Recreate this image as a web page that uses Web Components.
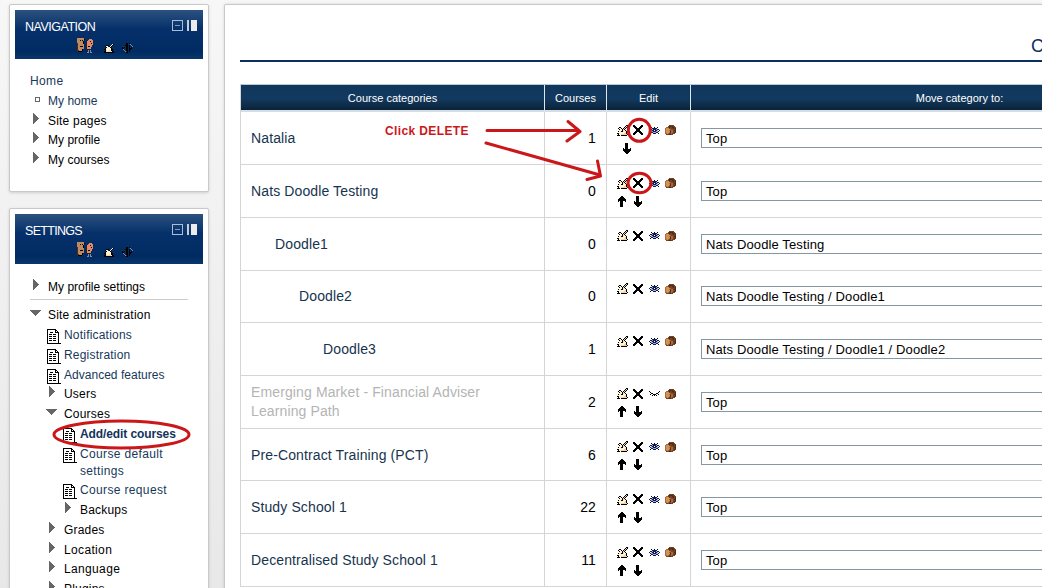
<!DOCTYPE html>
<html lang="en">
<head>
<meta charset="utf-8">
<title>Course categories</title>
<style>
    html, body {
        margin: 0;
        height: 588px;
        overflow: hidden;
        background: linear-gradient(#f7f7f7, #e8e8e8);
        font-family: "Liberation Sans", Arial, sans-serif;
    }
</style>
</head>
<body>
<courses-page></courses-page>

<script>
const COLOURS = {
    a: '#666666', k: '#000000', w: '#fff3d6', f: '#f3d5a8', b: '#101a58', c: '#9db0cc', n: '#a8683c',
    d: '#4a2c18', m: '#754321', o: '#cf9155', s: '#c08a60', r: '#e08a68', x: '#3a1c1c', g: '#26364f', y: '#7d8ea4'
};

const ICONS = {
    hand: [
        '.........kk',
        '........kfk',
        '..kk...kfk.',
        '.kwwk.kfk..',
        '..kwwkfk...',
        '..wwwkfwk..',
        '.kwwkkwwwk.',
        '..wwwwwwfk.',
        'kkwwwwwffk.',
        '.kwwffffffk',
        'kkk.kkkkkk.'
    ],
    smallhand: [
        '........wk',
        '..kkk..wk.',
        '.kww.kwk..',
        '..kwwwk...',
        '.kwwwwwk..',
        'kkwwwwwkk.',
        '.kfwwfwkk.',
        'kkffffffkk',
        'kkkkkkkkkk'
    ],
    cross: [
        'kk......kk',
        'kkk....kkk',
        '.kkk..kkk.',
        '..kkkkkk..',
        '...kkkk...',
        '...kkkk...',
        '..kkkkkk..',
        '.kkk..kkk.',
        'kkk....kkk',
        'kk......kk'
    ],
    eye: [
        '..k..k..k..',
        '...bbbbb...',
        '.bbcbbbcbb.',
        'b.cbbwbbc.b',
        '.bccbbbccb.',
        '..bbcccbb..',
        '.k..bbb..k.'
    ],
    closed: [
        'k.........k',
        '.k.......k.',
        '..kk...kk..',
        '.k..kkk..k.',
        '...k.k.k...'
    ],
    box: [
        '....mmmmm..',
        '...mddddmm.',
        '.nnmdmmddmm',
        'nooommmmdmd',
        'noooonmmmmd',
        'nooonmnnmdd',
        'noooodnnmmd',
        'nooondnnmdm',
        'nnonmmnmmm.',
        '.mmmddmm...'
    ],
    up: [
        '....kk....',
        '...kkkk...',
        '..kkkkkk..',
        '.kkkkkkkk.',
        '.kkkkkkkk.',
        '.k.kkk..k.',
        '...kkk....',
        '...kkk....',
        '...kkk....',
        '...kkk....',
        '...kkk....'
    ],
    down: [
        '...kkk....',
        '...kkk....',
        '...kkk....',
        '...kkk....',
        '...kkk....',
        '.k.kkk..k.',
        '.kkkkkkkk.',
        '.kkkkkkkk.',
        '..kkkkkk..',
        '...kkkk...',
        '....kk....'
    ],
    faces: [
        'sssssss..........',
        'sssssssk....rrr..',
        'sssksks...xrrrrr.',
        'ssssssk...rrrkrr.',
        'ssssssk..xrrrrrr.',
        'dsssssk..xrrrrkr.',
        'dssssss..xrrrrrr.',
        'dssssss..xrrrrr..',
        'dsskkks..xrkkrr..',
        'dssssss..xrrrr...',
        'dssssss..xrrrr...',
        'dssssk....xxx....',
        'ddsssk.....y.y...',
        'dkkkk......y.y...',
        '..........yy.yy..'
    ],
    move: [
        '....kk.k...',
        '....kk.gy..',
        '...kkk.k.y.',
        'g.g.kk.k..y',
        'k.k.kk.kgk.',
        'kk..kk.kkk.',
        '.y..kk.kk..',
        '..y.kk.k...',
        '...ygk.k...',
        '....kk.....'
    ],
    doc: [
        'kkkkkkkkk....',
        'k.......kk...',
        'k.......k.k..',
        'k..kkk..kkkk.',
        'k..........k.',
        'k.kkk.kkk..k.',
        'k..........k.',
        'k.kkk.kkk..k.',
        'k..........k.',
        'k.kkk.kkk..k.',
        'k..........k.',
        'k.kkk.kkk..k.',
        'k..........k.',
        'k..........k.',
        'kkkkkkkkkkkkkk'
    ],
    right: ['a.....', 'aa....', 'aaa...', 'aaaa..', 'aaaaa.', 'aaaaaa', 'aaaaa.', 'aaaa..', 'aaa...', 'aa....', 'a.....'],
    open: ['aaaaaaaaaaa', '.aaaaaaaaa.', '..aaaaaaa..', '...aaaaa...', '....aaa....', '.....a.....'],
    bullet: ['aaaaa', 'a...a', 'a...a', 'a...a', 'aaaaa']
};

class PixelIcon extends HTMLElement {
    connectedCallback() {
        const rows = ICONS[this.getAttribute('name')];
        const width = Math.max(...rows.map(row => row.length));
        let rects = '';
        rows.forEach((row, y) => {
            for (const run of row.matchAll(/([a-z])\1*/g)) {
                rects += `<rect x="${run.index}" y="${y}" width="${run[0].length}" height="1" fill="${COLOURS[run[1]]}"/>`;
            }
        });
        this.attachShadow({mode: 'open'}).innerHTML = `
            <style>
                :host { display: block; flex: none; }
                svg { display: block; }
            </style>
            <svg width="${width}" height="${rows.length}" shape-rendering="crispEdges">${rects}</svg>
        `;
    }
}

class SideBlock extends HTMLElement {
    connectedCallback() {
        this.attachShadow({mode: 'open'}).innerHTML = `
            <style>
                :host {
                    display: block;
                    box-sizing: border-box;
                    padding: 5px 5px 0;
                    background: #fff;
                    border: 1px solid #c9c9c9;
                    border-radius: 2px;
                    box-shadow: 0 1px 3px rgba(0,0,0,0.15);
                }
                header {
                    box-sizing: border-box;
                    height: var(--header-height, 49px);
                    padding: 8px 6px 0 10px;
                    background: linear-gradient(#2b527f, #06306a 38%, #002b62 85%, #08366a);
                    color: #fff;
                }
                .title, .controls, .tools { display: flex; }
                .title { justify-content: space-between; height: 18px; }
                h2 { margin: 0; font-size: 12.5px; line-height: 19px; font-weight: normal; letter-spacing: var(--title-spacing, -0.5px); }
                .controls { gap: 4px; padding-top: 2px; }
                .tools { padding-left: 52px; align-items: flex-end; height: 17px; }
                .tools pixel-icon + pixel-icon { margin-left: 10px; }
                .tools pixel-icon:last-child { margin-left: 8px; }
            </style>
            <header>
                <div class="title">
                    <h2>${this.getAttribute('heading')}</h2>
                    <div class="controls">
                        <svg width="11" height="11" shape-rendering="crispEdges"><rect x=".5" y=".5" width="10" height="10" fill="none" stroke="#a9bdd8"/><path d="M3 5.5h5" stroke="#7f9cc4"/></svg>
                        <svg width="10" height="11" shape-rendering="crispEdges"><rect width="2" height="11" fill="#c5ccd5"/><rect x="4" width="6" height="11" fill="#ececec"/></svg>
                    </div>
                </div>
                <div class="tools">
                    <pixel-icon name="faces"></pixel-icon>
                    <pixel-icon name="smallhand"></pixel-icon>
                    <pixel-icon name="move"></pixel-icon>
                </div>
            </header>
            <slot></slot>
        `;
    }
}

class TreeItem extends HTMLElement {
    connectedCallback() {
        const icon = this.getAttribute('icon');
        this.attachShadow({mode: 'open'}).innerHTML = `
            <style>
                :host {
                    display: flex;
                    box-sizing: border-box;
                    min-height: 19.75px;
                    padding: 1px 0 1.75px calc(15px + var(--level, 0) * 16px);
                    color: #000;
                    font-size: 12px;
                    line-height: 17px;
                    letter-spacing: 0.2px;
                }
                :host([link]) { color: #17385a; }
                :host([current]) { font-weight: bold; color: #14325a; letter-spacing: -0.1px; }
                :host([tight]) { letter-spacing: 0.02px; }
                :host([loose]) { letter-spacing: 0.35px; }
                .mark { width: 18px; flex: none; box-sizing: border-box; }
                .right { padding: 0 0 0 3px; }
                .open { padding-top: 3px; }
                .bullet { padding: 4px 0 0 5px; }
                .doc { padding: 2px 0 0 1px; height: 13px; }
            </style>
            ${icon ? `<div class="mark ${icon}"><pixel-icon name="${icon}"></pixel-icon></div>` : ''}
            <div><slot></slot></div>
        `;
    }
}

class CategoryRow extends HTMLElement {
    connectedCallback() {
        const edit = this.getAttribute('edit').split(' ');
        const icons = names => names.map(name => `<div><pixel-icon name="${name}"></pixel-icon></div>`).join('');
        this.attachShadow({mode: 'open'}).innerHTML = `
            <style>
                :host {
                    display: grid;
                    grid-template-columns: 304px 62px 84px 538px;
                    height: 52.72px;
                    box-sizing: border-box;
                    border-bottom: 1px solid #d5d5d5;
                    color: #17344f;
                    font-size: 14px;
                    line-height: 19px;
                    letter-spacing: 0.12px;
                }
                div { box-sizing: border-box; }
                .name, .count, .edit { border-right: 1px solid #d5d5d5; }
                .name { display: flex; align-items: center; padding: 1px 50px 0 calc(10px + var(--depth, 0) * 24px); }
                :host([dimmed]) .name { color: #b4b4b4; }
                .count { display: flex; align-items: center; justify-content: flex-end; padding: 1px 10px 0 0; color: #000; }
                .edit { padding: 10px 0 0 7px; }
                .line { display: flex; height: 17px; }
                .line div { width: 16px; height: 16px; display: flex; align-items: center; justify-content: center; }
                .moves { padding-top: 1px; }
                .single { padding-left: 5px; }
                .target { display: flex; align-items: center; padding-left: 10px; }
                .field { width: 500px; height: 20px; padding-left: 4px; border: 1px solid #8397a5; background: #fff; color: #000; font-size: 13px; line-height: 19px; }
            </style>
            <div class="name"><span><slot></slot></span></div>
            <div class="count">${this.getAttribute('count')}</div>
            <div class="edit">
                <div class="line">${icons(['hand', 'cross', this.hasAttribute('dimmed') ? 'closed' : 'eye', 'box'])}</div>
                <div class="line moves ${edit.length === 1 ? 'single' : ''}">${edit[0] === 'none' ? '' : icons(edit)}</div>
            </div>
            <div class="target"><div class="field">${this.getAttribute('target')}</div></div>
        `;
    }
}

class CategoryTable extends HTMLElement {
    connectedCallback() {
        this.attachShadow({mode: 'open'}).innerHTML = `
            <style>
                :host { display: block; width: 988px; border-left: 1px solid #d5d5d5; }
                .head {
                    display: grid;
                    grid-template-columns: 304px 62px 84px 538px;
                    height: 28.4px;
                    box-sizing: border-box;
                    border-top: 1px solid #b8cad8;
                    border-bottom: 2px solid #d3dee6;
                    background: linear-gradient(#10365c, #12395f 55%, #0b2238);
                    color: #fff;
                    font-size: 11px;
                    line-height: 27px;
                    text-align: center;
                }
                .head div { border-right: 1px solid #dfe6ec; }
            </style>
            <div class="head"><div>Course categories</div><div>Courses</div><div>Edit</div><div>Move category to:</div></div>
            <slot></slot>
        `;
    }
}

// Red pen marks drawn over the page
class PenMarks extends HTMLElement {
    connectedCallback() {
        this.attachShadow({mode: 'open'}).innerHTML = `
            <style>
                :host { position: absolute; inset: 0; pointer-events: none; }
                svg { display: block; }
                b { position: absolute; left: 385px; top: 123px; color: #cc1719; font-size: 12px; line-height: 17px; letter-spacing: 0.38px; white-space: nowrap; }
            </style>
            <svg width="1042" height="588" fill="none" stroke="#cb171a" stroke-width="3" stroke-linecap="round" stroke-linejoin="round">
                <ellipse cx="121.5" cy="434.5" rx="67.5" ry="13.5"/>
                <circle cx="639.3" cy="130.3" r="11"/>
                <ellipse cx="639.5" cy="183" rx="11.5" ry="9.8"/>
                <path d="M487 130.5H579M568 121.500L580 131.500L567 141M486 143L600 175M597.500 161L600.500 176L587 179.500"/>
            </svg>
            <b>Click DELETE</b>
        `;
    }
}

class CoursesPage extends HTMLElement {
    connectedCallback() {
        this.attachShadow({mode: 'open'}).innerHTML = `
            <style>
                :host { display: flex; position: relative; width: 1042px; height: 588px; overflow: hidden; }
                aside { flex: none; width: 200px; margin: 4px 15px 0 9px; display: flex; flex-direction: column; gap: 16px; }
                .nav { height: 188px; flex: none; }
                .settings { height: 420px; flex: none; --header-height: 50px; --title-spacing: -0.7px; }
                .list { padding-top: 13px; }
                .settings .list { padding-top: 13.6px; }
                hr { margin: 2px 15px 6px; border: 0; border-top: 1px solid #ccc; }
                .l1 { --level: 1; }
                .l2 { --level: 2; }
                main { flex: none; box-sizing: border-box; width: 1020px; height: 600px; margin-top: 4px; padding-left: 15px; background: #fff; border: 1px solid #c9c9c9; border-radius: 2px; box-shadow: 0 0 3px rgba(0,0,0,0.15); }
                h1 { box-sizing: border-box; width: 988px; height: 57px; margin: 0 0 22px; padding: 31px 0 0 791px; border-bottom: 2px solid #0b305d; color: #0b305d; font-size: 18px; line-height: 20px; font-weight: normal; }
                .d1 { --depth: 1; }
                .d2 { --depth: 2; }
                .d3 { --depth: 3; }
            </style>
            <aside>
                <side-block class="nav" heading="NAVIGATION">
                    <div class="list">
                        <tree-item link loose>Home</tree-item>
                        <tree-item link icon="bullet" tight>My home</tree-item>
                        <tree-item icon="right">Site pages</tree-item>
                        <tree-item icon="right" tight>My profile</tree-item>
                        <tree-item icon="right" tight>My courses</tree-item>
                    </div>
                </side-block>
                <side-block class="settings" heading="SETTINGS">
                    <div class="list">
                        <tree-item icon="right" tight>My profile settings</tree-item>
                        <hr>
                        <tree-item icon="open">Site administration</tree-item>
                        <tree-item class="l1" link icon="doc">Notifications</tree-item>
                        <tree-item class="l1" link icon="doc">Registration</tree-item>
                        <tree-item class="l1" link icon="doc" tight>Advanced features</tree-item>
                        <tree-item class="l1" icon="right">Users</tree-item>
                        <tree-item class="l1" icon="open">Courses</tree-item>
                        <tree-item class="l2" link current icon="doc">Add/edit courses</tree-item>
                        <tree-item class="l2" link icon="doc" loose>Course default<br>settings</tree-item>
                        <tree-item class="l2" link icon="doc" loose>Course request</tree-item>
                        <tree-item class="l2" icon="right">Backups</tree-item>
                        <tree-item class="l1" icon="right">Grades</tree-item>
                        <tree-item class="l1" icon="right" loose>Location</tree-item>
                        <tree-item class="l1" icon="right" loose>Language</tree-item>
                        <tree-item class="l1" icon="right">Plugins</tree-item>
                    </div>
                </side-block>
            </aside>
            <main>
                <h1>C</h1>
                <category-table>
                    <category-row count="1" edit="down" target="Top">Natalia</category-row>
                    <category-row count="0" edit="up down" target="Top">Nats Doodle Testing</category-row>
                    <category-row class="d1" count="0" edit="none" target="Nats Doodle Testing">Doodle1</category-row>
                    <category-row class="d2" count="0" edit="none" target="Nats Doodle Testing / Doodle1">Doodle2</category-row>
                    <category-row class="d3" count="1" edit="none" target="Nats Doodle Testing / Doodle1 / Doodle2">Doodle3</category-row>
                    <category-row dimmed count="2" edit="up down" target="Top">Emerging Market - Financial Adviser Learning Path</category-row>
                    <category-row count="6" edit="up down" target="Top">Pre-Contract Training (PCT)</category-row>
                    <category-row count="22" edit="up down" target="Top">Study School 1</category-row>
                    <category-row count="11" edit="up down" target="Top">Decentralised Study School 1</category-row>
                </category-table>
            </main>
            <pen-marks></pen-marks>
        `;
    }
}

customElements.define('pixel-icon', PixelIcon);
customElements.define('side-block', SideBlock);
customElements.define('tree-item', TreeItem);
customElements.define('category-row', CategoryRow);
customElements.define('category-table', CategoryTable);
customElements.define('pen-marks', PenMarks);
customElements.define('courses-page', CoursesPage);
</script>
</body>
</html>
